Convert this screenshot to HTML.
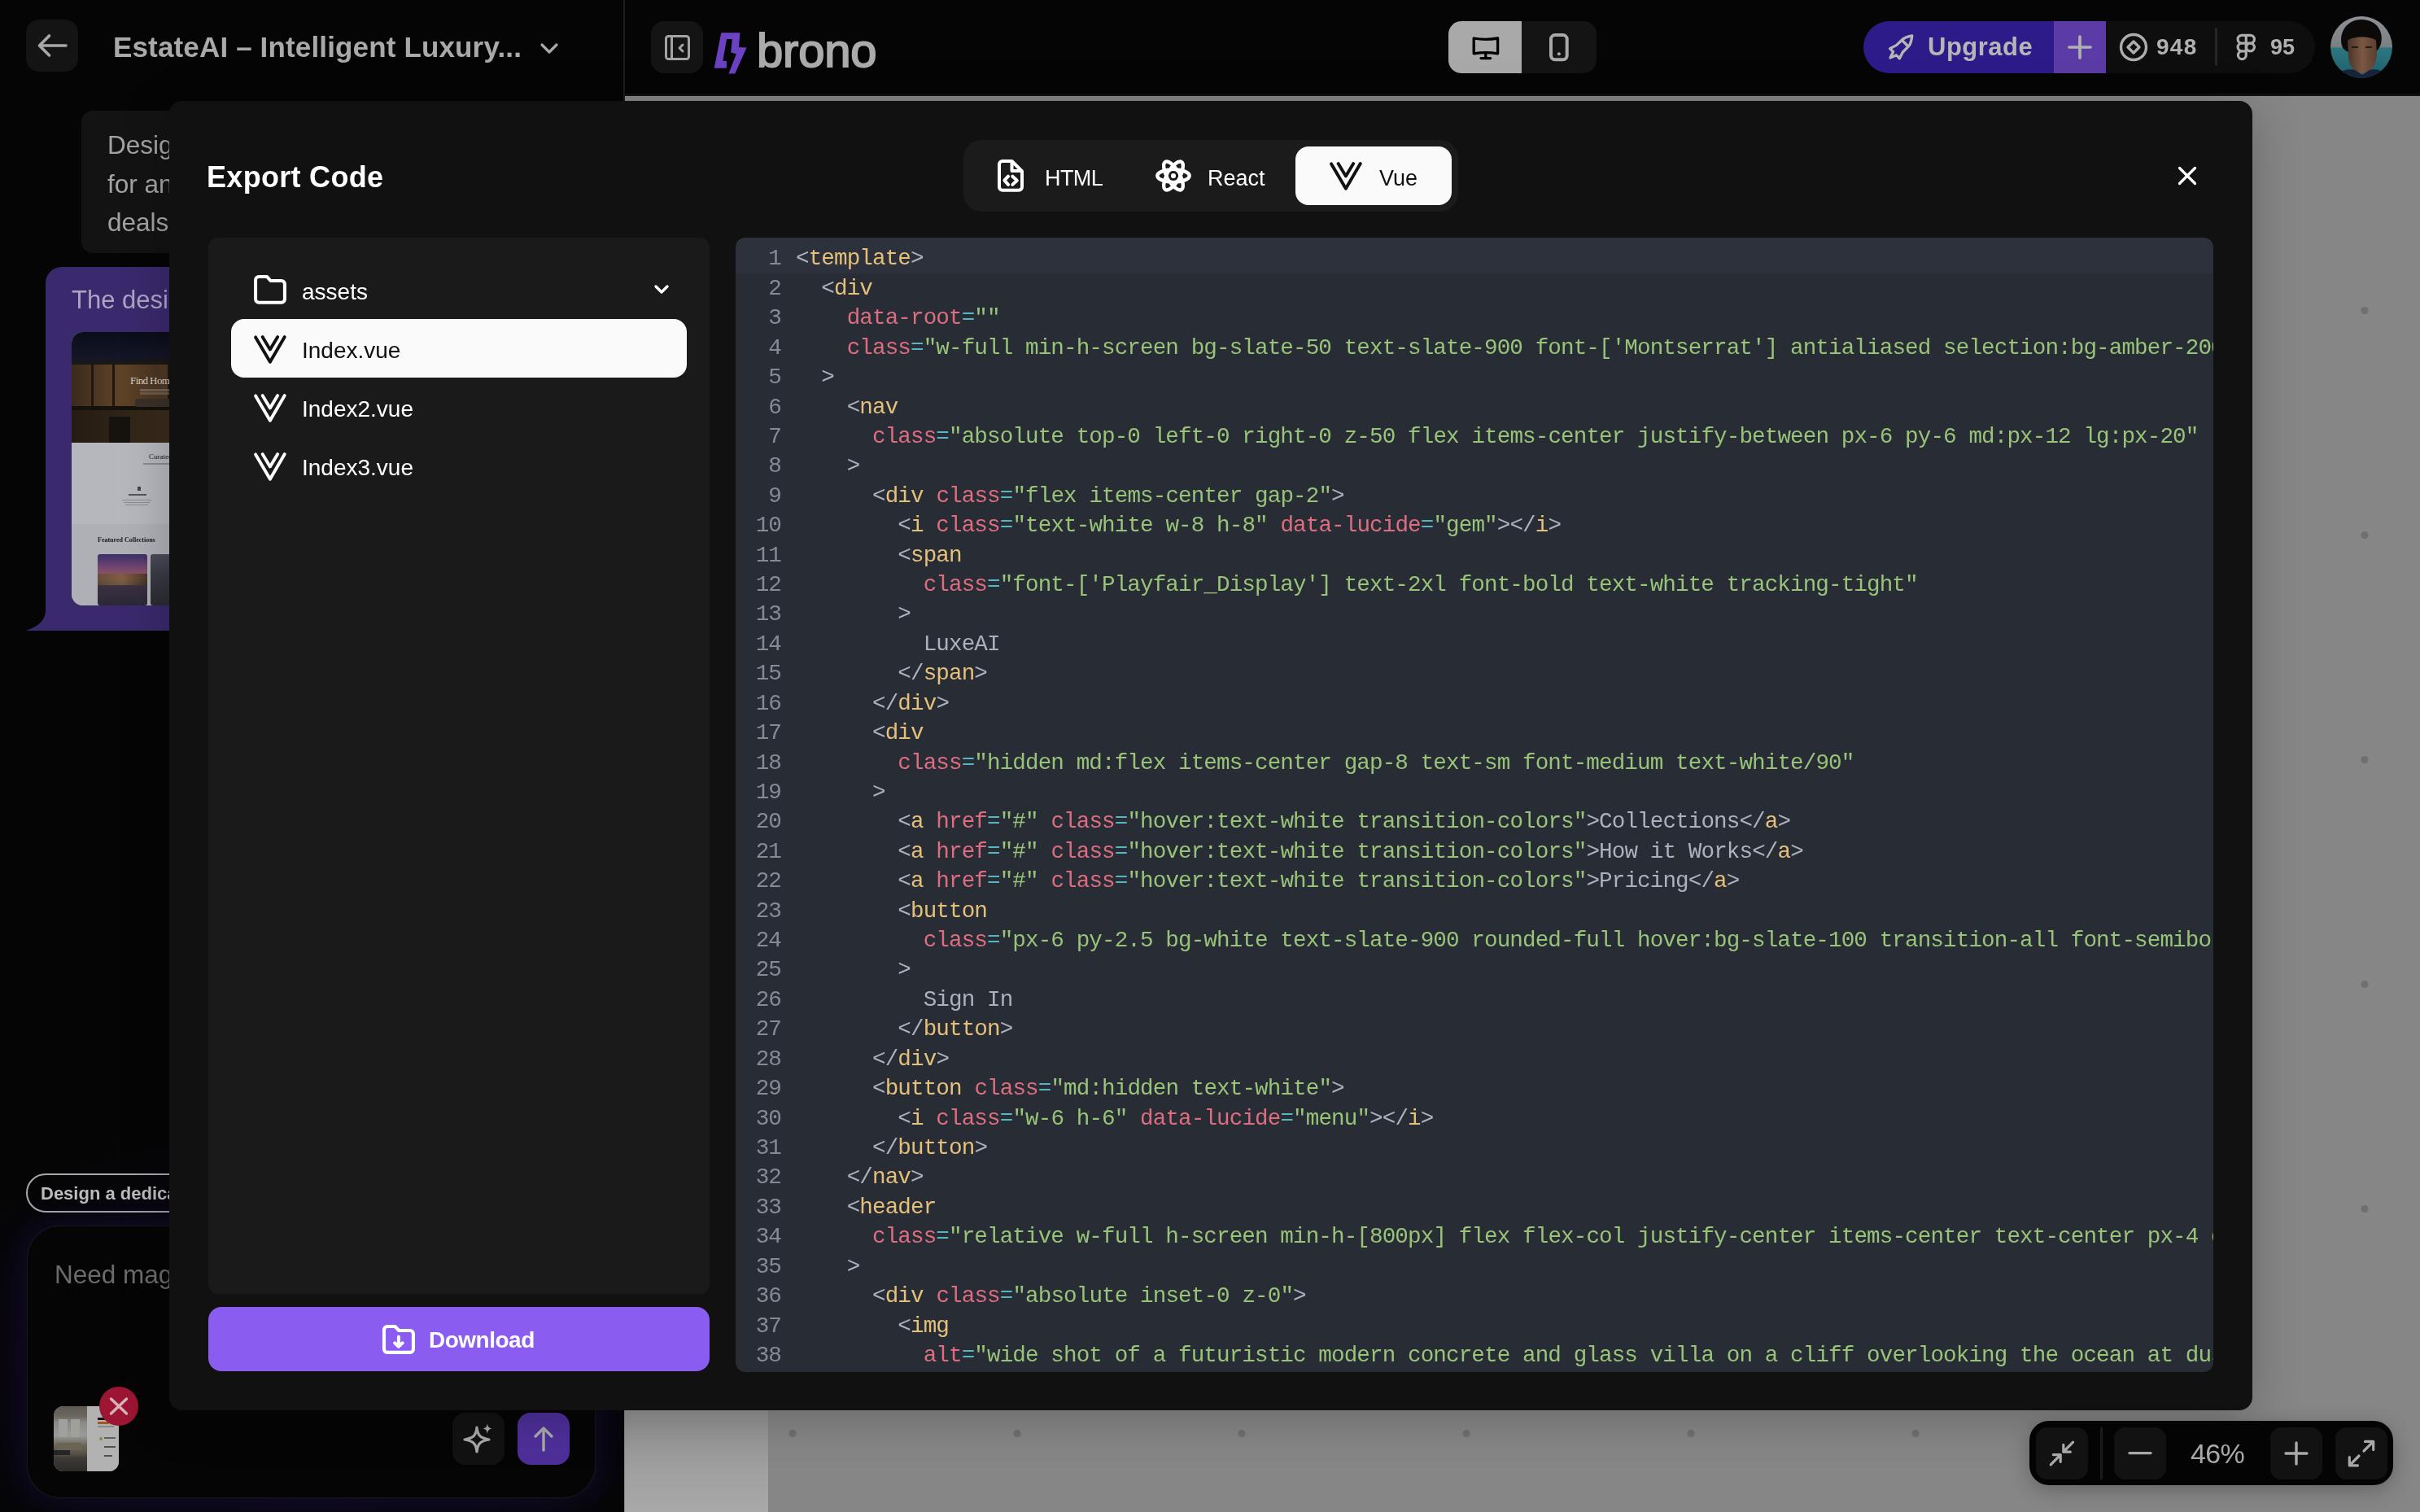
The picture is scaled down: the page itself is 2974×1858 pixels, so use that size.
<!DOCTYPE html><html><head><meta charset="utf-8"><style>
html,body{margin:0;padding:0;}
body{width:2974px;height:1858px;overflow:hidden;position:relative;background:#050505;font-family:"Liberation Sans", sans-serif;}
.t{position:absolute;white-space:nowrap;will-change:transform;}
.b{position:absolute;}
.s{position:absolute;overflow:visible;}
.code{position:absolute;font-family:"Liberation Mono", monospace;white-space:pre;will-change:transform;}
.ln{position:absolute;text-align:right;}
.tg{color:#e5c07b}.at{color:#de6d80}.eq{color:#56b6c2}.st{color:#98c379}.pu{color:#abb2bf}
</style></head><body>
<div class="b" style="left:767px;top:118px;width:2207px;height:1740px;background:#868686;border-radius:0px;"></div>
<div class="b" style="left:768px;top:1733px;width:176px;height:125px;background:linear-gradient(#929292,#a9a9a9);border-radius:0px;"></div>
<svg class="s" style="left:0;top:0" width="2974" height="1858"><circle cx="974" cy="381.6" r="4.6" fill="#707070"/><circle cx="974" cy="657.6" r="4.6" fill="#707070"/><circle cx="974" cy="933.6" r="4.6" fill="#707070"/><circle cx="974" cy="1209.6" r="4.6" fill="#707070"/><circle cx="974" cy="1485.6" r="4.6" fill="#707070"/><circle cx="974" cy="1761.6" r="4.6" fill="#707070"/><circle cx="1250" cy="381.6" r="4.6" fill="#707070"/><circle cx="1250" cy="657.6" r="4.6" fill="#707070"/><circle cx="1250" cy="933.6" r="4.6" fill="#707070"/><circle cx="1250" cy="1209.6" r="4.6" fill="#707070"/><circle cx="1250" cy="1485.6" r="4.6" fill="#707070"/><circle cx="1250" cy="1761.6" r="4.6" fill="#707070"/><circle cx="1526" cy="381.6" r="4.6" fill="#707070"/><circle cx="1526" cy="657.6" r="4.6" fill="#707070"/><circle cx="1526" cy="933.6" r="4.6" fill="#707070"/><circle cx="1526" cy="1209.6" r="4.6" fill="#707070"/><circle cx="1526" cy="1485.6" r="4.6" fill="#707070"/><circle cx="1526" cy="1761.6" r="4.6" fill="#707070"/><circle cx="1802" cy="381.6" r="4.6" fill="#707070"/><circle cx="1802" cy="657.6" r="4.6" fill="#707070"/><circle cx="1802" cy="933.6" r="4.6" fill="#707070"/><circle cx="1802" cy="1209.6" r="4.6" fill="#707070"/><circle cx="1802" cy="1485.6" r="4.6" fill="#707070"/><circle cx="1802" cy="1761.6" r="4.6" fill="#707070"/><circle cx="2078" cy="381.6" r="4.6" fill="#707070"/><circle cx="2078" cy="657.6" r="4.6" fill="#707070"/><circle cx="2078" cy="933.6" r="4.6" fill="#707070"/><circle cx="2078" cy="1209.6" r="4.6" fill="#707070"/><circle cx="2078" cy="1485.6" r="4.6" fill="#707070"/><circle cx="2078" cy="1761.6" r="4.6" fill="#707070"/><circle cx="2354" cy="381.6" r="4.6" fill="#707070"/><circle cx="2354" cy="657.6" r="4.6" fill="#707070"/><circle cx="2354" cy="933.6" r="4.6" fill="#707070"/><circle cx="2354" cy="1209.6" r="4.6" fill="#707070"/><circle cx="2354" cy="1485.6" r="4.6" fill="#707070"/><circle cx="2354" cy="1761.6" r="4.6" fill="#707070"/><circle cx="2630" cy="381.6" r="4.6" fill="#707070"/><circle cx="2630" cy="657.6" r="4.6" fill="#707070"/><circle cx="2630" cy="933.6" r="4.6" fill="#707070"/><circle cx="2630" cy="1209.6" r="4.6" fill="#707070"/><circle cx="2630" cy="1485.6" r="4.6" fill="#707070"/><circle cx="2630" cy="1761.6" r="4.6" fill="#707070"/><circle cx="2906" cy="381.6" r="4.6" fill="#707070"/><circle cx="2906" cy="657.6" r="4.6" fill="#707070"/><circle cx="2906" cy="933.6" r="4.6" fill="#707070"/><circle cx="2906" cy="1209.6" r="4.6" fill="#707070"/><circle cx="2906" cy="1485.6" r="4.6" fill="#707070"/><circle cx="2906" cy="1761.6" r="4.6" fill="#707070"/></svg>
<div class="b" style="left:767px;top:115px;width:2207px;height:3px;background:#101010;border-radius:0px;"></div>
<div class="b" style="left:766px;top:0px;width:2px;height:124px;background:#1c1c1c;border-radius:0px;"></div>
<div class="b" style="left:32px;top:24px;width:64px;height:64px;background:#141414;border-radius:16px;"></div>
<svg class="s" style="left:32px;top:24px;" width="64" height="64" viewBox="0 0 64 64"><path d="M16.5 32 H49 M28.5 20 L16.5 32 L28.5 44" stroke="#a8a8a8" stroke-width="3.6" fill="none" stroke-linecap="round" stroke-linejoin="round"/></svg>
<div class="t" style="left:139px;top:38.33px;font-size:35px;line-height:39.09px;color:#a9a9a9;font-weight:700;letter-spacing:0.15px;">EstateAI &ndash; Intelligent Luxury...</div>
<svg class="s" style="left:660px;top:50px;" width="30" height="20" viewBox="0 0 30 20"><path d="M6 5 L15 14 L24 5" stroke="#a9a9a9" stroke-width="3.2" fill="none" stroke-linecap="round" stroke-linejoin="round"/></svg>
<div class="b" style="left:800px;top:26px;width:64px;height:64px;background:#141414;border-radius:16px;"></div>
<svg class="s" style="left:800px;top:26px;" width="64" height="64" viewBox="0 0 64 64"><rect x="18.5" y="18.5" width="28" height="28" rx="3" stroke="#a3a3a3" stroke-width="3" fill="none"/><path d="M25.5 18.5 V46.5" stroke="#a3a3a3" stroke-width="3"/><path d="M39 29 L35 33 L39 37" stroke="#a3a3a3" stroke-width="3" fill="none" stroke-linecap="round" stroke-linejoin="round"/></svg>
<svg class="s" style="left:0px;top:0px;" width="2974" height="120" viewBox="0 0 2974 120"><polygon fill="#6a42c2" points="886.3,40.2 909.5,40.2 907.9,58 917.6,58.4 903.3,90.6 895.4,90.6 904.9,66.3 898.2,64.6 899.8,48.1 893,48.1 888.3,74.7 893,74.9 892.8,83.8 877.7,83.8"/></svg>
<div class="t" style="left:930px;top:30.11px;font-size:58px;line-height:64.79px;color:#ababab;font-weight:400;letter-spacing:-0.2px;-webkit-text-stroke:1.9px #ababab;">brono</div>
<div class="b" style="left:1780px;top:26px;width:182px;height:64px;background:#141414;border-radius:16px;"></div>
<div class="b" style="left:1780px;top:26px;width:90px;height:64px;background:#a9a9a9;border-radius:16px;border-top-right-radius:0;border-bottom-right-radius:0;"></div>
<svg class="s" style="left:1780px;top:26px;" width="90" height="64" viewBox="0 0 90 64"><path d="M31.2 21 Q45.8 23.6 60.6 21 L60.6 39.8 Q45.8 37.6 31.2 39.8 Z" stroke="#000" stroke-width="3.3" fill="none" stroke-linejoin="round"/><path d="M45.8 39 V45.6 M40 45.6 H51.6" stroke="#000" stroke-width="3.2" stroke-linecap="round"/></svg>
<svg class="s" style="left:1870px;top:26px;" width="92" height="64" viewBox="0 0 92 64"><rect x="36" y="17.1" width="19.7" height="30.1" rx="5" stroke="#a9a9a9" stroke-width="4" fill="none"/><circle cx="45.9" cy="40.3" r="2" fill="#a9a9a9"/></svg>
<div class="b" style="left:2290px;top:26px;width:555px;height:64px;background:#0e0e0e;border-radius:32px;"></div>
<div class="b" style="left:2290px;top:26px;width:298px;height:64px;background:#2d1b8a;border-radius:32px;border-top-right-radius:0;border-bottom-right-radius:0;"></div>
<div class="b" style="left:2524px;top:26px;width:64px;height:64px;background:#5b3ca6;border-radius:0px;"></div>
<svg class="s" style="left:2312px;top:36px;" width="48" height="44" viewBox="0 0 48 44"><path d="M37.8 7.8 C33 8.6 29.5 9.8 26.8 11.8 L18.5 19.6 L10.6 23.6 L14.6 27.6 L11 35 L18.6 31.8 L22.4 35.8 L26.4 28 L34.4 19.8 C36.2 17.2 37.2 13 37.8 7.8 Z M26.5 14.5 L32 20" stroke="#b6b6b6" stroke-width="3.3" fill="none" stroke-linejoin="round" stroke-linecap="round"/></svg>
<div class="t" style="left:2369px;top:40.54px;font-size:31px;line-height:34.63px;color:#b6b6b6;font-weight:700;letter-spacing:0.5px;">Upgrade</div>
<svg class="s" style="left:2524px;top:26px;" width="64" height="64" viewBox="0 0 64 64"><path d="M32 19 V45 M19 32 H45" stroke="#b0b0b0" stroke-width="3.7" stroke-linecap="round"/></svg>
<svg class="s" style="left:2600px;top:36px;" width="44" height="44" viewBox="0 0 44 44"><circle cx="22" cy="22" r="15.5" stroke="#adadad" stroke-width="3.4" fill="none"/><path d="M22 15 L29 22 L22 29 L15 22 Z" stroke="#adadad" stroke-width="3.4" fill="none" stroke-linejoin="round"/></svg>
<div class="t" style="left:2650px;top:42.46px;font-size:28px;line-height:31.28px;color:#b0b0b0;font-weight:700;letter-spacing:1.3px;">948</div>
<div class="b" style="left:2722px;top:34px;width:3px;height:47px;background:#262626;border-radius:2px;"></div>
<svg class="s" style="left:2744px;top:38px;" width="32" height="40" viewBox="0 0 32 40"><path d="M16.25 5.3 H11 a4.9 4.9 0 0 0 0 9.8 H16.25 Z M16.25 5.3 H21.5 a4.9 4.9 0 0 1 0 9.8 H16.25 Z M16.25 15.1 H11 a4.9 4.9 0 0 0 0 9.8 H16.25 Z M21.5 15.1 a4.9 4.9 0 1 1 0 9.8 a4.9 4.9 0 0 1 0 -9.8 Z M16.25 24.9 H11 a4.9 4.9 0 1 0 5.25 4.9 Z" stroke="#adadad" stroke-width="3.2" fill="none" stroke-linejoin="round"/></svg>
<div class="t" style="left:2790px;top:43.36px;font-size:27px;line-height:30.16px;color:#b0b0b0;font-weight:700;">95</div>
<svg class="s" style="left:2864px;top:20px" width="76" height="76" viewBox="0 0 76 76"><defs><clipPath id="avc"><circle cx="38" cy="38" r="38"/></clipPath><linearGradient id="avsky" x1="0" y1="0" x2="0" y2="1"><stop offset="0" stop-color="#8e9296"/><stop offset="0.5" stop-color="#7a7f83"/><stop offset="0.51" stop-color="#2d7780"/><stop offset="1" stop-color="#1d5f6c"/></linearGradient><linearGradient id="avface" x1="0" y1="0" x2="1" y2="0"><stop offset="0" stop-color="#4a3428"/><stop offset="0.5" stop-color="#7a5844"/><stop offset="1" stop-color="#5a3e30"/></linearGradient></defs><g clip-path="url(#avc)"><rect width="76" height="76" fill="url(#avsky)"/><path d="M14 36 C10 20 20 4 38 4 C56 4 66 18 62 34 C60 40 57 42 56 44 L22 44 C18 42 15 40 14 36 Z" fill="#0c0a09"/><path d="M21 30 C26 24 52 24 56 30 L57 48 C56 62 48 70 39 70 C29 70 23 62 22 50 Z" fill="url(#avface)"/><path d="M26 38 H34 M43 38 H51" stroke="#241812" stroke-width="2"/><path d="M4 80 C8 66 22 64 30 66 L39 72 L48 66 C56 64 68 66 72 80 Z" fill="#16233a"/></g></svg>
<div class="b" style="left:0;top:1380px;width:767px;height:478px;background:radial-gradient(ellipse 520px 300px at 380px 290px, rgba(38,22,92,0.55), rgba(20,10,50,0.25) 60%, rgba(0,0,0,0) 100%);"></div>
<div class="b" style="left:100px;top:136px;width:400px;height:175px;background:#131313;border-radius:14px;"></div>
<div class="t" style="left:132px;top:160.79px;font-size:31.5px;line-height:35.19px;color:#a3a3a3;font-weight:400;">Design a dedicated</div>
<div class="t" style="left:132px;top:208.69px;font-size:31.5px;line-height:35.19px;color:#a3a3a3;font-weight:400;">for an AI</div>
<div class="t" style="left:132px;top:256.49px;font-size:31.5px;line-height:35.19px;color:#a3a3a3;font-weight:400;">deals</div>
<svg class="s" style="left:0;top:0" width="767" height="800"><path d="M76 328 H700 a20 20 0 0 1 20 20 V775 H32 C40 772 56 766 56 750 V348 a20 20 0 0 1 20 -20 Z" fill="#3a296c"/></svg>
<div class="t" style="left:88px;top:351.94px;font-size:31px;line-height:34.63px;color:#ada3c4;font-weight:400;">The design</div>
<div class="b" style="left:88px;top:408px;width:300px;height:336px;border-radius:14px;overflow:hidden;background:#b6b7bd;">
<div class="b" style="left:0;top:0;width:300px;height:136px;background:linear-gradient(180deg,#0c0d1a 0%,#151626 24%,#1a1716 30%,#2a2018 60%,#221a12 100%);"></div>
<div class="b" style="left:0;top:32px;width:300px;height:6px;background:#1c1814;transform:skewY(-3deg);"></div>
<div class="b" style="left:0;top:40px;width:300px;height:52px;background:linear-gradient(90deg,#3a2a1c 0%,#5e4328 20%,#4a3522 35%,#6a4c2c 55%,#3c2c1c 100%);"></div>
<div class="b" style="left:24px;top:40px;width:3px;height:52px;background:#20180f;"></div>
<div class="b" style="left:50px;top:40px;width:3px;height:52px;background:#20180f;"></div>
<div class="b" style="left:118px;top:40px;width:3px;height:52px;background:#20180f;"></div>
<div class="b" style="left:0;top:91px;width:300px;height:5px;background:#15110d;"></div>
<div class="b" style="left:0;top:96px;width:300px;height:40px;background:linear-gradient(90deg,#241b12,#3a2c1c 40%,#2a2016);"></div>
<div class="b" style="left:46px;top:104px;width:26px;height:32px;background:#15120f;"></div>
<div class="b" style="left:72px;top:52px;font-family:'Liberation Serif',serif;font-size:13px;font-weight:400;color:#d8d0c6;white-space:nowrap;letter-spacing:-0.6px">Find Homes</div>
<div class="b" style="left:84px;top:70px;width:60px;height:3px;background:#8a7c70;opacity:0.6"></div>
<div class="b" style="left:84px;top:74px;width:50px;height:3px;background:#8a7c70;opacity:0.5"></div>
<div class="b" style="left:78px;top:82px;width:70px;height:10px;border-radius:3px;background:#3a3028;"></div>
<div class="b" style="left:0;top:236px;width:300px;height:100px;background:#afb0b6;"></div>
<div class="b" style="left:95px;top:148px;font-family:'Liberation Serif',serif;font-size:9px;color:#1a1a1e;white-space:nowrap">Curated T</div>
<div class="b" style="left:88px;top:161px;width:40px;height:2px;background:#8a8a90;"></div>
<div class="b" style="left:81px;top:190px;width:4px;height:5px;background:#444;"></div>
<div class="b" style="left:70px;top:199px;width:22px;height:2px;background:#555;"></div>
<div class="b" style="left:62px;top:206px;width:36px;height:1px;background:#8a8a90;"></div>
<div class="b" style="left:64px;top:209px;width:32px;height:1px;background:#8a8a90;"></div>
<div class="b" style="left:66px;top:212px;width:28px;height:1px;background:#8a8a90;"></div>
<div class="b" style="left:32px;top:251px;font-family:'Liberation Serif',serif;font-size:8px;font-weight:700;color:#1a1a1e;white-space:nowrap">Featured Collections</div>
<div class="b" style="left:32px;top:273px;width:61px;height:63px;border-radius:3px;background:linear-gradient(180deg,#3a3068 0%,#7a4a70 30%,#a05a48 48%,#3a3040 62%,#2a2838 100%);"></div>
<div class="b" style="left:32px;top:297px;width:61px;height:14px;background:linear-gradient(90deg,#5a4a38,#7a6040 50%,#3a3020);opacity:0.8"></div>
<div class="b" style="left:97px;top:273px;width:40px;height:63px;border-radius:3px;background:linear-gradient(180deg,#4a4c5a 0%,#3a3a44 40%,#2a2a30 100%);"></div>
</div>
<div class="b" style="left:32px;top:1442px;width:400px;height:44px;border:2px solid #a9a9a9;border-radius:24px;"></div>
<div class="t" style="left:50px;top:1454.89px;font-size:22px;line-height:24.57px;color:#bdbdbd;font-weight:700;">Design a dedicated</div>
<div class="b" style="left:34px;top:1507px;width:697px;height:333px;background:#050505;border-radius:40px;box-shadow:0 0 0 1.5px #151418, 0 0 36px 8px rgba(48,26,120,0.24);"></div>
<div class="t" style="left:67px;top:1548.69px;font-size:31.5px;line-height:35.19px;color:#6b6b6b;font-weight:400;">Need magic? Describe</div>
<div class="b" style="left:66px;top:1728px;width:80px;height:80px;border-radius:12px;overflow:hidden;background:#b4b4b4;">
<div class="b" style="left:0;top:0;width:41px;height:80px;background:linear-gradient(180deg,#5e5a54 0%,#6a665e 15%,#8a8a86 25%,#9a9b98 45%,#6a6658 60%,#5a5448 72%,#3c3a36 80%,#2e2c2a 100%);"></div>
<div class="b" style="left:6px;top:16px;width:11px;height:22px;background:#a0a19e;"></div>
<div class="b" style="left:21px;top:16px;width:11px;height:22px;background:#9ea09a;"></div>
<div class="b" style="left:4px;top:45px;width:30px;height:9px;background:#6a6454;"></div>
<div class="b" style="left:0;top:54px;width:20px;height:6px;background:#26262a;"></div>
<div class="b" style="left:41px;top:0;width:39px;height:80px;background:#b2b2b2;"></div>
<div class="b" style="left:54px;top:14px;width:10px;height:3px;background:#161616;"></div>
<div class="b" style="left:54px;top:19px;width:14px;height:3px;background:#a05a20;"></div>
<div class="b" style="left:54px;top:24px;width:20px;height:2px;background:#8a8a8a;"></div>
<div class="b" style="left:56px;top:38px;width:4px;height:4px;border-radius:50%;background:#8a8a40;"></div>
<div class="b" style="left:62px;top:38px;width:14px;height:2px;background:#606060;"></div>
<div class="b" style="left:62px;top:49px;width:14px;height:2px;background:#505050;"></div>
<div class="b" style="left:62px;top:60px;width:10px;height:2px;background:#505050;"></div>
</div>
<svg class="s" style="left:122px;top:1704px;" width="48" height="48" viewBox="0 0 48 48"><circle cx="24" cy="24" r="24" fill="#9c1533"/><path d="M14.5 15 L33.5 33 M33.5 15 L14.5 33" stroke="#d6b2b8" stroke-width="3.4" stroke-linecap="round"/></svg>
<div class="b" style="left:556px;top:1736px;width:64px;height:64px;background:#121212;border-radius:16px;"></div>
<svg class="s" style="left:556px;top:1736px;" width="64" height="64" viewBox="0 0 64 64"><path d="M30 18 C31 27 33 31 45 33 C33 35 31 39 30 48 C29 39 27 35 15 33 C27 31 29 27 30 18 Z" stroke="#a9a9a9" stroke-width="3.2" fill="none" stroke-linejoin="round"/><path d="M43 13 C43.6 17.5 44.5 18.6 49 19.5 C44.5 20.4 43.6 21.5 43 26 C42.4 21.5 41.5 20.4 37 19.5 C41.5 18.6 42.4 17.5 43 13 Z" fill="#a9a9a9"/></svg>
<div class="b" style="left:636px;top:1736px;width:64px;height:64px;background:#4e2f9a;border-radius:16px;"></div>
<svg class="s" style="left:636px;top:1736px;" width="64" height="64" viewBox="0 0 64 64"><path d="M32 46 V19 M22 29 L32 19 L42 29" stroke="#aaaaaa" stroke-width="3.4" fill="none" stroke-linecap="round" stroke-linejoin="round"/></svg>
<div class="b" style="left:208px;top:124px;width:2560px;height:1609px;background:#111111;border-radius:16px;box-shadow:0 10px 60px rgba(0,0,0,0.22);"></div>
<div class="t" style="left:254px;top:198.42px;font-size:36px;line-height:40.21px;color:#ffffff;font-weight:700;letter-spacing:0.3px;">Export Code</div>
<svg class="s" style="left:2668px;top:196px;" width="40" height="40" viewBox="0 0 40 40"><path d="M10.5 10.5 L29.5 29.5 M29.5 10.5 L10.5 29.5" stroke="#ffffff" stroke-width="3.2" stroke-linecap="round"/></svg>
<div class="b" style="left:1184px;top:172px;width:608px;height:88px;background:#1b1b1b;border-radius:22px;"></div>
<div class="b" style="left:1592px;top:180px;width:192px;height:72px;background:#fafafa;border-radius:16px;"></div>
<svg class="s" style="left:1215px;top:188px;" width="60" height="56" viewBox="0 0 60 56"><path d="M13 14 a4 4 0 0 1 4 -4 H28.5 L41 22.5 V41.7 a4 4 0 0 1 -4 4 H17 a4 4 0 0 1 -4 -4 Z" stroke="#fff" stroke-width="4" fill="none" stroke-linejoin="round"/><path d="M28.5 10 V22 H41" stroke="#fff" stroke-width="4" fill="none" stroke-linejoin="round"/><path d="M24 28.7 L19.4 33.7 L24 38.9 M29.3 28.7 L34.8 33.7 L29.3 38.9" stroke="#fff" stroke-width="4" fill="none" stroke-linecap="round" stroke-linejoin="round"/></svg>
<div class="t" style="left:1284px;top:203.56px;font-size:27px;line-height:30.16px;color:#ffffff;font-weight:400;letter-spacing:-0.6px;">HTML</div>
<svg class="s" style="left:1412px;top:188px;" width="60" height="56" viewBox="0 0 60 56"><g stroke="#fff" stroke-width="4.4" fill="none"><ellipse cx="30" cy="28" rx="19.7" ry="7.6"/><ellipse cx="30" cy="28" rx="19.7" ry="7.6" transform="rotate(60 30 28)"/><ellipse cx="30" cy="28" rx="19.7" ry="7.6" transform="rotate(-60 30 28)"/></g><circle cx="30" cy="28" r="6" fill="#1b1b1b"/><circle cx="30" cy="28" r="3.1" fill="#fff"/></svg>
<div class="t" style="left:1484px;top:203.56px;font-size:27px;line-height:30.16px;color:#ffffff;font-weight:400;">React</div>
<svg class="s" style="left:1634px;top:199px;" width="40" height="36" viewBox="0 0 40 36"><path d="M2.1 2.4 L19.9 32.8 L37.8 2.1 M10.6 2.1 L19.9 17.4 L29.2 2.1" stroke="#111" stroke-width="3.9" fill="none" stroke-linecap="round" stroke-linejoin="round"/></svg>
<div class="t" style="left:1695px;top:203.56px;font-size:27px;line-height:30.16px;color:#111111;font-weight:400;">Vue</div>
<div class="b" style="left:256px;top:292px;width:616px;height:1298px;background:#1a1a1a;border-radius:12px;"></div>
<svg class="s" style="left:305px;top:330px;" width="55" height="50" viewBox="0 0 55 50"><path d="M9.1 14 a4 4 0 0 1 4 -4.1 H23 L27.5 15 H40.9 a4 4 0 0 1 4 4 V37.7 a4 4 0 0 1 -4 4 H13.1 a4 4 0 0 1 -4 -4 Z" stroke="#fff" stroke-width="4" fill="none" stroke-linejoin="round"/></svg>
<div class="t" style="left:371px;top:342.66px;font-size:28px;line-height:31.28px;color:#ffffff;font-weight:400;">assets</div>
<svg class="s" style="left:800px;top:346px;" width="26" height="20" viewBox="0 0 26 20"><path d="M6 6 L13 13 L20 6" stroke="#fff" stroke-width="3.4" fill="none" stroke-linecap="round" stroke-linejoin="round"/></svg>
<div class="b" style="left:284px;top:392px;width:560px;height:72px;background:#fafafa;border-radius:16px;"></div>
<svg class="s" style="left:312px;top:412px;" width="40" height="36" viewBox="0 0 40 36"><path d="M2.1 2.4 L19.9 32.8 L37.8 2.1 M10.6 2.1 L19.9 17.4 L29.2 2.1" stroke="#111" stroke-width="3.9" fill="none" stroke-linecap="round" stroke-linejoin="round"/></svg>
<div class="t" style="left:371px;top:414.66px;font-size:28px;line-height:31.28px;color:#111111;font-weight:400;">Index.vue</div>
<svg class="s" style="left:312px;top:483.5px;" width="40" height="36" viewBox="0 0 40 36"><path d="M2.1 2.4 L19.9 32.8 L37.8 2.1 M10.6 2.1 L19.9 17.4 L29.2 2.1" stroke="#fff" stroke-width="3.9" fill="none" stroke-linecap="round" stroke-linejoin="round"/></svg>
<div class="t" style="left:371px;top:486.66px;font-size:28px;line-height:31.28px;color:#ffffff;font-weight:400;">Index2.vue</div>
<svg class="s" style="left:312px;top:555.5px;" width="40" height="36" viewBox="0 0 40 36"><path d="M2.1 2.4 L19.9 32.8 L37.8 2.1 M10.6 2.1 L19.9 17.4 L29.2 2.1" stroke="#fff" stroke-width="3.9" fill="none" stroke-linecap="round" stroke-linejoin="round"/></svg>
<div class="t" style="left:371px;top:558.66px;font-size:28px;line-height:31.28px;color:#ffffff;font-weight:400;">Index3.vue</div>
<div class="b" style="left:256px;top:1606px;width:616px;height:79px;background:#8a5cf0;border-radius:16px;"></div>
<svg class="s" style="left:460px;top:1620px;" width="60" height="52" viewBox="0 0 60 52"><path d="M12 14 a4 4 0 0 1 4 -4 H25.4 L30.3 15 H43.9 a4 4 0 0 1 4 4 V37.9 a4 4 0 0 1 -4 4 H16 a4 4 0 0 1 -4 -4 Z" stroke="#fff" stroke-width="4.1" fill="none" stroke-linejoin="round"/><path d="M29.9 22.7 V34.2 M25.1 30.3 L29.9 34.7 L34.7 30.3" stroke="#fff" stroke-width="4" fill="none" stroke-linecap="round" stroke-linejoin="round"/></svg>
<div class="t" style="left:527px;top:1630.66px;font-size:28px;line-height:31.28px;color:#ffffff;font-weight:700;letter-spacing:-0.5px;">Download</div>
<div class="b" style="left:904px;top:292px;width:1816px;height:1394px;background:#282c34;border-radius:12px;overflow:hidden;">
<div class="b" style="left:0;top:0;width:1816px;height:44.4px;background:#2c313c;"></div>
<div class="code pu" style="left:74px;top:8.40px;font-size:27.6px;letter-spacing:-0.892px;line-height:36.42px;"><span class="pu">&lt;</span><span class="tg">template</span><span class="pu">&gt;</span></div>
<div class="code" style="left:0;width:56px;text-align:right;top:8.40px;font-size:27.6px;letter-spacing:-0.892px;line-height:36.42px;color:#858b96;">1</div>
<div class="code pu" style="left:74px;top:44.82px;font-size:27.6px;letter-spacing:-0.892px;line-height:36.42px;">  <span class="pu">&lt;</span><span class="tg">div</span></div>
<div class="code" style="left:0;width:56px;text-align:right;top:44.82px;font-size:27.6px;letter-spacing:-0.892px;line-height:36.42px;color:#858b96;">2</div>
<div class="code pu" style="left:74px;top:81.24px;font-size:27.6px;letter-spacing:-0.892px;line-height:36.42px;">    <span class="at">data-root</span><span class="eq">=</span><span class="st">&quot;&quot;</span></div>
<div class="code" style="left:0;width:56px;text-align:right;top:81.24px;font-size:27.6px;letter-spacing:-0.892px;line-height:36.42px;color:#858b96;">3</div>
<div class="code pu" style="left:74px;top:117.66px;font-size:27.6px;letter-spacing:-0.892px;line-height:36.42px;">    <span class="at">class</span><span class="eq">=</span><span class="st">&quot;w-full min-h-screen bg-slate-50 text-slate-900 font-[&#x27;Montserrat&#x27;] antialiased selection:bg-amber-200 selection:text-amber-900&quot;</span></div>
<div class="code" style="left:0;width:56px;text-align:right;top:117.66px;font-size:27.6px;letter-spacing:-0.892px;line-height:36.42px;color:#858b96;">4</div>
<div class="code pu" style="left:74px;top:154.08px;font-size:27.6px;letter-spacing:-0.892px;line-height:36.42px;">  <span class="pu">&gt;</span></div>
<div class="code" style="left:0;width:56px;text-align:right;top:154.08px;font-size:27.6px;letter-spacing:-0.892px;line-height:36.42px;color:#858b96;">5</div>
<div class="code pu" style="left:74px;top:190.50px;font-size:27.6px;letter-spacing:-0.892px;line-height:36.42px;">    <span class="pu">&lt;</span><span class="tg">nav</span></div>
<div class="code" style="left:0;width:56px;text-align:right;top:190.50px;font-size:27.6px;letter-spacing:-0.892px;line-height:36.42px;color:#858b96;">6</div>
<div class="code pu" style="left:74px;top:226.92px;font-size:27.6px;letter-spacing:-0.892px;line-height:36.42px;">      <span class="at">class</span><span class="eq">=</span><span class="st">&quot;absolute top-0 left-0 right-0 z-50 flex items-center justify-between px-6 py-6 md:px-12 lg:px-20&quot;</span></div>
<div class="code" style="left:0;width:56px;text-align:right;top:226.92px;font-size:27.6px;letter-spacing:-0.892px;line-height:36.42px;color:#858b96;">7</div>
<div class="code pu" style="left:74px;top:263.34px;font-size:27.6px;letter-spacing:-0.892px;line-height:36.42px;">    <span class="pu">&gt;</span></div>
<div class="code" style="left:0;width:56px;text-align:right;top:263.34px;font-size:27.6px;letter-spacing:-0.892px;line-height:36.42px;color:#858b96;">8</div>
<div class="code pu" style="left:74px;top:299.76px;font-size:27.6px;letter-spacing:-0.892px;line-height:36.42px;">      <span class="pu">&lt;</span><span class="tg">div</span><span class="pu"> </span><span class="at">class</span><span class="eq">=</span><span class="st">&quot;flex items-center gap-2&quot;</span><span class="pu">&gt;</span></div>
<div class="code" style="left:0;width:56px;text-align:right;top:299.76px;font-size:27.6px;letter-spacing:-0.892px;line-height:36.42px;color:#858b96;">9</div>
<div class="code pu" style="left:74px;top:336.18px;font-size:27.6px;letter-spacing:-0.892px;line-height:36.42px;">        <span class="pu">&lt;</span><span class="tg">i</span><span class="pu"> </span><span class="at">class</span><span class="eq">=</span><span class="st">&quot;text-white w-8 h-8&quot;</span><span class="pu"> </span><span class="at">data-lucide</span><span class="eq">=</span><span class="st">&quot;gem&quot;</span><span class="pu">&gt;</span><span class="pu">&lt;/</span><span class="tg">i</span><span class="pu">&gt;</span></div>
<div class="code" style="left:0;width:56px;text-align:right;top:336.18px;font-size:27.6px;letter-spacing:-0.892px;line-height:36.42px;color:#858b96;">10</div>
<div class="code pu" style="left:74px;top:372.60px;font-size:27.6px;letter-spacing:-0.892px;line-height:36.42px;">        <span class="pu">&lt;</span><span class="tg">span</span></div>
<div class="code" style="left:0;width:56px;text-align:right;top:372.60px;font-size:27.6px;letter-spacing:-0.892px;line-height:36.42px;color:#858b96;">11</div>
<div class="code pu" style="left:74px;top:409.02px;font-size:27.6px;letter-spacing:-0.892px;line-height:36.42px;">          <span class="at">class</span><span class="eq">=</span><span class="st">&quot;font-[&#x27;Playfair_Display&#x27;] text-2xl font-bold text-white tracking-tight&quot;</span></div>
<div class="code" style="left:0;width:56px;text-align:right;top:409.02px;font-size:27.6px;letter-spacing:-0.892px;line-height:36.42px;color:#858b96;">12</div>
<div class="code pu" style="left:74px;top:445.44px;font-size:27.6px;letter-spacing:-0.892px;line-height:36.42px;">        <span class="pu">&gt;</span></div>
<div class="code" style="left:0;width:56px;text-align:right;top:445.44px;font-size:27.6px;letter-spacing:-0.892px;line-height:36.42px;color:#858b96;">13</div>
<div class="code pu" style="left:74px;top:481.86px;font-size:27.6px;letter-spacing:-0.892px;line-height:36.42px;">          <span class="pu">LuxeAI</span></div>
<div class="code" style="left:0;width:56px;text-align:right;top:481.86px;font-size:27.6px;letter-spacing:-0.892px;line-height:36.42px;color:#858b96;">14</div>
<div class="code pu" style="left:74px;top:518.28px;font-size:27.6px;letter-spacing:-0.892px;line-height:36.42px;">        <span class="pu">&lt;/</span><span class="tg">span</span><span class="pu">&gt;</span></div>
<div class="code" style="left:0;width:56px;text-align:right;top:518.28px;font-size:27.6px;letter-spacing:-0.892px;line-height:36.42px;color:#858b96;">15</div>
<div class="code pu" style="left:74px;top:554.70px;font-size:27.6px;letter-spacing:-0.892px;line-height:36.42px;">      <span class="pu">&lt;/</span><span class="tg">div</span><span class="pu">&gt;</span></div>
<div class="code" style="left:0;width:56px;text-align:right;top:554.70px;font-size:27.6px;letter-spacing:-0.892px;line-height:36.42px;color:#858b96;">16</div>
<div class="code pu" style="left:74px;top:591.12px;font-size:27.6px;letter-spacing:-0.892px;line-height:36.42px;">      <span class="pu">&lt;</span><span class="tg">div</span></div>
<div class="code" style="left:0;width:56px;text-align:right;top:591.12px;font-size:27.6px;letter-spacing:-0.892px;line-height:36.42px;color:#858b96;">17</div>
<div class="code pu" style="left:74px;top:627.54px;font-size:27.6px;letter-spacing:-0.892px;line-height:36.42px;">        <span class="at">class</span><span class="eq">=</span><span class="st">&quot;hidden md:flex items-center gap-8 text-sm font-medium text-white/90&quot;</span></div>
<div class="code" style="left:0;width:56px;text-align:right;top:627.54px;font-size:27.6px;letter-spacing:-0.892px;line-height:36.42px;color:#858b96;">18</div>
<div class="code pu" style="left:74px;top:663.96px;font-size:27.6px;letter-spacing:-0.892px;line-height:36.42px;">      <span class="pu">&gt;</span></div>
<div class="code" style="left:0;width:56px;text-align:right;top:663.96px;font-size:27.6px;letter-spacing:-0.892px;line-height:36.42px;color:#858b96;">19</div>
<div class="code pu" style="left:74px;top:700.38px;font-size:27.6px;letter-spacing:-0.892px;line-height:36.42px;">        <span class="pu">&lt;</span><span class="tg">a</span><span class="pu"> </span><span class="at">href</span><span class="eq">=</span><span class="st">&quot;#&quot;</span><span class="pu"> </span><span class="at">class</span><span class="eq">=</span><span class="st">&quot;hover:text-white transition-colors&quot;</span><span class="pu">&gt;</span><span class="pu">Collections</span><span class="pu">&lt;/</span><span class="tg">a</span><span class="pu">&gt;</span></div>
<div class="code" style="left:0;width:56px;text-align:right;top:700.38px;font-size:27.6px;letter-spacing:-0.892px;line-height:36.42px;color:#858b96;">20</div>
<div class="code pu" style="left:74px;top:736.80px;font-size:27.6px;letter-spacing:-0.892px;line-height:36.42px;">        <span class="pu">&lt;</span><span class="tg">a</span><span class="pu"> </span><span class="at">href</span><span class="eq">=</span><span class="st">&quot;#&quot;</span><span class="pu"> </span><span class="at">class</span><span class="eq">=</span><span class="st">&quot;hover:text-white transition-colors&quot;</span><span class="pu">&gt;</span><span class="pu">How</span><span class="pu"> </span><span class="pu">it</span><span class="pu"> </span><span class="pu">Works</span><span class="pu">&lt;/</span><span class="tg">a</span><span class="pu">&gt;</span></div>
<div class="code" style="left:0;width:56px;text-align:right;top:736.80px;font-size:27.6px;letter-spacing:-0.892px;line-height:36.42px;color:#858b96;">21</div>
<div class="code pu" style="left:74px;top:773.22px;font-size:27.6px;letter-spacing:-0.892px;line-height:36.42px;">        <span class="pu">&lt;</span><span class="tg">a</span><span class="pu"> </span><span class="at">href</span><span class="eq">=</span><span class="st">&quot;#&quot;</span><span class="pu"> </span><span class="at">class</span><span class="eq">=</span><span class="st">&quot;hover:text-white transition-colors&quot;</span><span class="pu">&gt;</span><span class="pu">Pricing</span><span class="pu">&lt;/</span><span class="tg">a</span><span class="pu">&gt;</span></div>
<div class="code" style="left:0;width:56px;text-align:right;top:773.22px;font-size:27.6px;letter-spacing:-0.892px;line-height:36.42px;color:#858b96;">22</div>
<div class="code pu" style="left:74px;top:809.64px;font-size:27.6px;letter-spacing:-0.892px;line-height:36.42px;">        <span class="pu">&lt;</span><span class="tg">button</span></div>
<div class="code" style="left:0;width:56px;text-align:right;top:809.64px;font-size:27.6px;letter-spacing:-0.892px;line-height:36.42px;color:#858b96;">23</div>
<div class="code pu" style="left:74px;top:846.06px;font-size:27.6px;letter-spacing:-0.892px;line-height:36.42px;">          <span class="at">class</span><span class="eq">=</span><span class="st">&quot;px-6 py-2.5 bg-white text-slate-900 rounded-full hover:bg-slate-100 transition-all font-semibold shadow-lg&quot;</span></div>
<div class="code" style="left:0;width:56px;text-align:right;top:846.06px;font-size:27.6px;letter-spacing:-0.892px;line-height:36.42px;color:#858b96;">24</div>
<div class="code pu" style="left:74px;top:882.48px;font-size:27.6px;letter-spacing:-0.892px;line-height:36.42px;">        <span class="pu">&gt;</span></div>
<div class="code" style="left:0;width:56px;text-align:right;top:882.48px;font-size:27.6px;letter-spacing:-0.892px;line-height:36.42px;color:#858b96;">25</div>
<div class="code pu" style="left:74px;top:918.90px;font-size:27.6px;letter-spacing:-0.892px;line-height:36.42px;">          <span class="pu">Sign</span><span class="pu"> </span><span class="pu">In</span></div>
<div class="code" style="left:0;width:56px;text-align:right;top:918.90px;font-size:27.6px;letter-spacing:-0.892px;line-height:36.42px;color:#858b96;">26</div>
<div class="code pu" style="left:74px;top:955.32px;font-size:27.6px;letter-spacing:-0.892px;line-height:36.42px;">        <span class="pu">&lt;/</span><span class="tg">button</span><span class="pu">&gt;</span></div>
<div class="code" style="left:0;width:56px;text-align:right;top:955.32px;font-size:27.6px;letter-spacing:-0.892px;line-height:36.42px;color:#858b96;">27</div>
<div class="code pu" style="left:74px;top:991.74px;font-size:27.6px;letter-spacing:-0.892px;line-height:36.42px;">      <span class="pu">&lt;/</span><span class="tg">div</span><span class="pu">&gt;</span></div>
<div class="code" style="left:0;width:56px;text-align:right;top:991.74px;font-size:27.6px;letter-spacing:-0.892px;line-height:36.42px;color:#858b96;">28</div>
<div class="code pu" style="left:74px;top:1028.16px;font-size:27.6px;letter-spacing:-0.892px;line-height:36.42px;">      <span class="pu">&lt;</span><span class="tg">button</span><span class="pu"> </span><span class="at">class</span><span class="eq">=</span><span class="st">&quot;md:hidden text-white&quot;</span><span class="pu">&gt;</span></div>
<div class="code" style="left:0;width:56px;text-align:right;top:1028.16px;font-size:27.6px;letter-spacing:-0.892px;line-height:36.42px;color:#858b96;">29</div>
<div class="code pu" style="left:74px;top:1064.58px;font-size:27.6px;letter-spacing:-0.892px;line-height:36.42px;">        <span class="pu">&lt;</span><span class="tg">i</span><span class="pu"> </span><span class="at">class</span><span class="eq">=</span><span class="st">&quot;w-6 h-6&quot;</span><span class="pu"> </span><span class="at">data-lucide</span><span class="eq">=</span><span class="st">&quot;menu&quot;</span><span class="pu">&gt;</span><span class="pu">&lt;/</span><span class="tg">i</span><span class="pu">&gt;</span></div>
<div class="code" style="left:0;width:56px;text-align:right;top:1064.58px;font-size:27.6px;letter-spacing:-0.892px;line-height:36.42px;color:#858b96;">30</div>
<div class="code pu" style="left:74px;top:1101.00px;font-size:27.6px;letter-spacing:-0.892px;line-height:36.42px;">      <span class="pu">&lt;/</span><span class="tg">button</span><span class="pu">&gt;</span></div>
<div class="code" style="left:0;width:56px;text-align:right;top:1101.00px;font-size:27.6px;letter-spacing:-0.892px;line-height:36.42px;color:#858b96;">31</div>
<div class="code pu" style="left:74px;top:1137.42px;font-size:27.6px;letter-spacing:-0.892px;line-height:36.42px;">    <span class="pu">&lt;/</span><span class="tg">nav</span><span class="pu">&gt;</span></div>
<div class="code" style="left:0;width:56px;text-align:right;top:1137.42px;font-size:27.6px;letter-spacing:-0.892px;line-height:36.42px;color:#858b96;">32</div>
<div class="code pu" style="left:74px;top:1173.84px;font-size:27.6px;letter-spacing:-0.892px;line-height:36.42px;">    <span class="pu">&lt;</span><span class="tg">header</span></div>
<div class="code" style="left:0;width:56px;text-align:right;top:1173.84px;font-size:27.6px;letter-spacing:-0.892px;line-height:36.42px;color:#858b96;">33</div>
<div class="code pu" style="left:74px;top:1210.26px;font-size:27.6px;letter-spacing:-0.892px;line-height:36.42px;">      <span class="at">class</span><span class="eq">=</span><span class="st">&quot;relative w-full h-screen min-h-[800px] flex flex-col justify-center items-center text-center px-4 overflow-hidden&quot;</span></div>
<div class="code" style="left:0;width:56px;text-align:right;top:1210.26px;font-size:27.6px;letter-spacing:-0.892px;line-height:36.42px;color:#858b96;">34</div>
<div class="code pu" style="left:74px;top:1246.68px;font-size:27.6px;letter-spacing:-0.892px;line-height:36.42px;">    <span class="pu">&gt;</span></div>
<div class="code" style="left:0;width:56px;text-align:right;top:1246.68px;font-size:27.6px;letter-spacing:-0.892px;line-height:36.42px;color:#858b96;">35</div>
<div class="code pu" style="left:74px;top:1283.10px;font-size:27.6px;letter-spacing:-0.892px;line-height:36.42px;">      <span class="pu">&lt;</span><span class="tg">div</span><span class="pu"> </span><span class="at">class</span><span class="eq">=</span><span class="st">&quot;absolute inset-0 z-0&quot;</span><span class="pu">&gt;</span></div>
<div class="code" style="left:0;width:56px;text-align:right;top:1283.10px;font-size:27.6px;letter-spacing:-0.892px;line-height:36.42px;color:#858b96;">36</div>
<div class="code pu" style="left:74px;top:1319.52px;font-size:27.6px;letter-spacing:-0.892px;line-height:36.42px;">        <span class="pu">&lt;</span><span class="tg">img</span></div>
<div class="code" style="left:0;width:56px;text-align:right;top:1319.52px;font-size:27.6px;letter-spacing:-0.892px;line-height:36.42px;color:#858b96;">37</div>
<div class="code pu" style="left:74px;top:1355.94px;font-size:27.6px;letter-spacing:-0.892px;line-height:36.42px;">          <span class="at">alt</span><span class="eq">=</span><span class="st">&quot;wide shot of a futuristic modern concrete and glass villa on a cliff overlooking the ocean at dusk&quot;</span></div>
<div class="code" style="left:0;width:56px;text-align:right;top:1355.94px;font-size:27.6px;letter-spacing:-0.892px;line-height:36.42px;color:#858b96;">38</div>
</div>
<div class="b" style="left:2494px;top:1746px;width:447px;height:79px;background:#040404;border-radius:24px;box-shadow:0 6px 24px rgba(0,0,0,0.25);"></div>
<div class="b" style="left:2502px;top:1754px;width:64px;height:64px;background:#121212;border-radius:14px;"></div>
<div class="b" style="left:2598px;top:1754px;width:64px;height:64px;background:#121212;border-radius:14px;"></div>
<div class="b" style="left:2790px;top:1754px;width:64px;height:64px;background:#121212;border-radius:14px;"></div>
<div class="b" style="left:2870px;top:1754px;width:64px;height:64px;background:#121212;border-radius:14px;"></div>
<div class="b" style="left:2581px;top:1754px;width:3px;height:64px;background:#1c1c1c;border-radius:0px;"></div>
<svg class="s" style="left:2502px;top:1754px;" width="64" height="64" viewBox="0 0 64 64"><path d="M18.2 45.8 L30.2 33.6 M21.3 33.6 H30.2 V42.3 M45.6 18.2 L33.8 30.2 M33.8 21.3 V30.2 H42.3" stroke="#a9a9a9" stroke-width="3.2" fill="none" stroke-linecap="round" stroke-linejoin="round"/></svg>
<svg class="s" style="left:2598px;top:1754px;" width="64" height="64" viewBox="0 0 64 64"><path d="M19 31.6 H45" stroke="#a9a9a9" stroke-width="3.4" stroke-linecap="round"/></svg>
<div class="t" style="left:2692px;top:1767.23px;font-size:34px;line-height:37.98px;color:#a9a9a9;font-weight:400;letter-spacing:-0.6px;">46%</div>
<svg class="s" style="left:2790px;top:1754px;" width="64" height="64" viewBox="0 0 64 64"><path d="M19 32 H45 M32 19 V45" stroke="#a9a9a9" stroke-width="3.4" stroke-linecap="round"/></svg>
<svg class="s" style="left:2870px;top:1754px;" width="64" height="64" viewBox="0 0 64 64"><path d="M46.7 17.4 L35 29 M36.5 17.4 H46.7 V27.6 M17.3 46.8 L29 35 M17.3 36.6 V46.8 H27.5" stroke="#a9a9a9" stroke-width="3.2" fill="none" stroke-linecap="round" stroke-linejoin="round"/></svg>
</body></html>
